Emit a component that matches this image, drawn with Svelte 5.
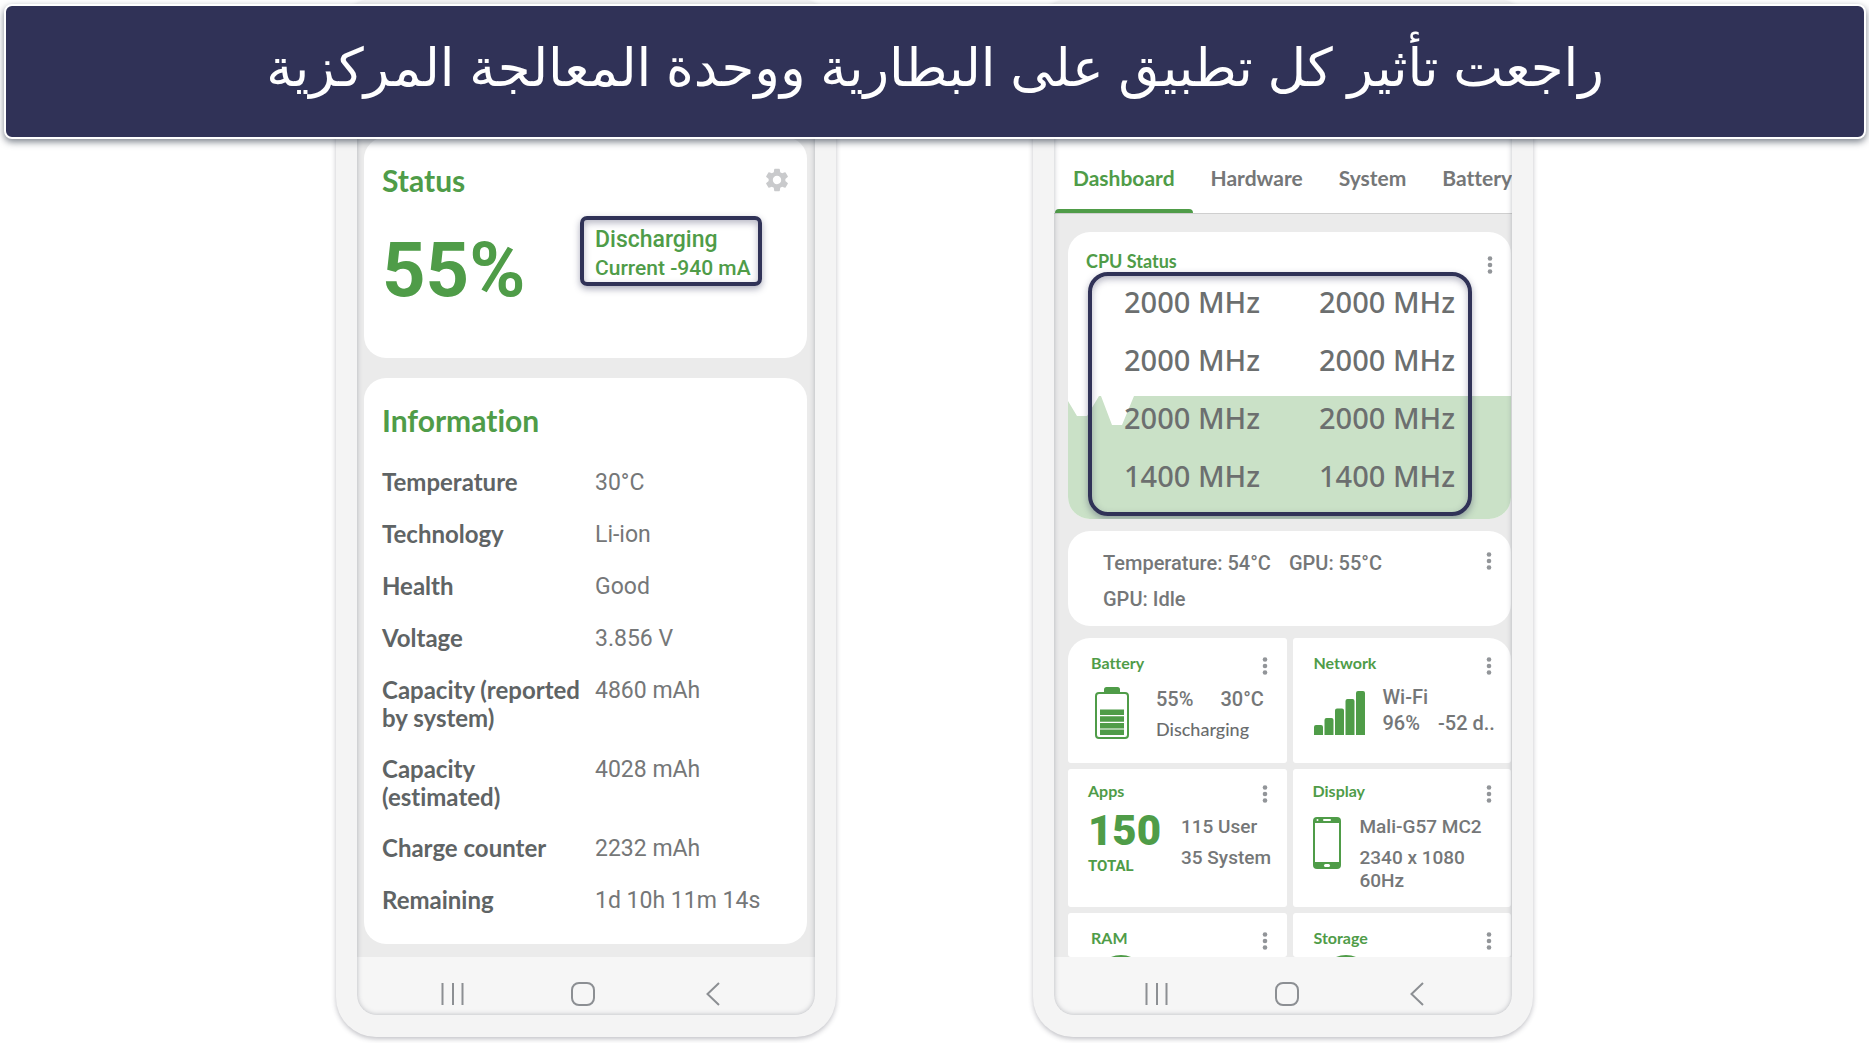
<script>
  const info = [
    ['Temperature', '30°C'],
    ['Technology', 'Li-ion'],
    ['Health', 'Good'],
    ['Voltage', '3.856 V'],
    ['Capacity (reported by system)', '4860 mAh'],
    ['Capacity (estimated)', '4028 mAh'],
    ['Charge counter', '2232 mAh'],
    ['Remaining', '1d 10h 11m 14s'],
  ];
  const cores = ['2000 MHz', '2000 MHz', '2000 MHz', '2000 MHz', '2000 MHz', '2000 MHz', '1400 MHz', '1400 MHz'];
  const tabs = ['Dashboard', 'Hardware', 'System', 'Battery'];
  let active = $state(0);
</script>

{#snippet kebab(name)}
  <button class="kebab" aria-label="{name} menu">
    <svg width="6" height="20" viewBox="0 0 6 20" aria-hidden="true">
      <circle cx="3" cy="3.5" r="2.3" /><circle cx="3" cy="10" r="2.3" /><circle cx="3" cy="16.5" r="2.3" />
    </svg>
  </button>
{/snippet}

{#snippet navbar(kind)}
  <nav class="navbar {kind}" aria-label="System navigation">
    <button aria-label="Recent apps">
      <svg width="24" height="24" viewBox="0 0 24 24"><path d="M1.5 1v22M12 1v22M21.5 1v22" /></svg>
    </button>
    <button aria-label="Home">
      <svg width="24" height="24" viewBox="0 0 24 24"><rect x="1" y="1" width="22" height="22" rx="7" /></svg>
    </button>
    <button aria-label="Back">
      <svg width="24" height="24" viewBox="0 0 24 24"><path d="M18 1 6.500 12 18 23" /></svg>
    </button>
  </nav>
{/snippet}

<div class="page">
  <h1 class="banner" dir="rtl" lang="ar">راجعت تأثير كل تطبيق على البطارية ووحدة المعالجة المركزية</h1>

  <main class="stage">
    <section class="phone" aria-label="Battery details">
      <div class="screen">
        <div class="battery-body">
          <article class="card status">
            <header class="card-head">
              <h2>Status</h2>
              <button class="gear" aria-label="Settings">
                <svg width="28" height="28" viewBox="0 0 24 24" aria-hidden="true">
                  <path d="M19.140 12.940c.04-.3.060-.610.060-.940 0-.320-.020-.640-.070-.940l2.030-1.580a.49.49 0 0 0 .120-.610l-1.920-3.320a.488.488 0 0 0-.590-.220l-2.390.960c-.500-.380-1.030-.700-1.620-.940l-.360-2.540a.484.484 0 0 0-.480-.410h-3.840c-.240 0-.430.170-.470.410l-.360 2.540c-.590.240-1.130.570-1.620.940l-2.390-.960c-.220-.080-.470 0-.590.220L2.740 8.870c-.120.210-.080.470.120.610l2.030 1.580c-.050.300-.090.630-.090.940s.020.640.070.940l-2.030 1.580a.49.49 0 0 0-.120.610l1.920 3.320c.120.220.370.290.590.220l2.390-.960c.500.380 1.030.700 1.620.940l.360 2.540c.050.240.240.410.480.410h3.840c.240 0 .440-.170.470-.410l.360-2.540c.590-.240 1.130-.560 1.620-.940l2.390.960c.220.080.470 0 .590-.220l1.920-3.320c.120-.220.070-.470-.120-.610zM12 15.600A3.610 3.610 0 0 1 8.400 12c0-1.980 1.620-3.600 3.600-3.600s3.600 1.620 3.600 3.600-1.620 3.600-3.600 3.600z" />
                </svg>
              </button>
            </header>
            <div class="level-row">
              <strong class="level">55%</strong>
              <div class="mark state">
                <span class="state-name">Discharging</span>
                <span class="state-current">Current -940 mA</span>
              </div>
            </div>
          </article>

          <article class="card information">
            <h2>Information</h2>
            <table>
              <tbody>
                {#each info as [label, value]}
                  <tr><th scope="row">{label}</th><td>{value}</td></tr>
                {/each}
              </tbody>
            </table>
          </article>
        </div>
        {@render navbar('first')}
      </div>
    </section>

    <section class="phone" aria-label="Device dashboard">
      <div class="screen">
        <div class="tabs" role="tablist">
          {#each tabs as tab, i}
            <button role="tab" aria-selected={active === i} class:active={active === i} onclick={() => (active = i)}>{tab}</button>
          {/each}
        </div>
        <div class="dash-body">
          <article class="card cpu">
            <svg class="chart" viewBox="0 0 443 123" preserveAspectRatio="none" aria-hidden="true">
              <path d="M0 5 9 20H19L31 0H33L44 29H54L66 0H443V123H0Z" />
            </svg>
            <header class="card-head">
              <h3>CPU Status</h3>
              {@render kebab('CPU Status')}
            </header>
            <div class="mark cores">
              {#each cores as core}<span>{core}</span>{/each}
            </div>
          </article>

          <article class="card temps">
            <div>
              <p><span>Temperature: 54°C</span><span>GPU: 55°C</span></p>
              <p>GPU: Idle</p>
            </div>
            {@render kebab('Temperature')}
          </article>

          <div class="tiles">
            <article class="tile battery">
              <header class="card-head"><h4>Battery</h4>{@render kebab('Battery')}</header>
              <div class="tile-body">
                <svg width="34" height="52" viewBox="0 0 34 52" aria-hidden="true">
                  <path class="fill" d="M9 6V2.500Q9 0 11.500 0H22.500Q25 0 25 2.500V6Z" />
                  <rect class="line" x="1" y="6" width="32" height="45" rx="3" />
                  <path class="fill" d="M5 22.500h24v5.500H5zM5 29.200h24v5.500H5zM5 35.900h24v5.500H5zM5 42.400h24v5.500H5z" />
                </svg>
                <div class="lines">
                  <p class="pair"><span>55%</span><span>30°C</span></p>
                  <p class="lato">Discharging</p>
                </div>
              </div>
            </article>

            <article class="tile network">
              <header class="card-head"><h4>Network</h4>{@render kebab('Network')}</header>
              <div class="tile-body">
                <svg width="51" height="44" viewBox="0 0 51 44" aria-hidden="true">
                  <path class="fill" d="M0 44V36q0-2 2-2h5q2 0 2 2v8zM10.500 44V29q0-2 2-2h5q2 0 2 2v15zM21 44V19.500q0-2 2-2h5q2 0 2 2V44zM31.500 44V10q0-2 2-2h5q2 0 2 2v34zM42 44V2q0-2 2-2h5q2 0 2 2v42z" />
                </svg>
                <div class="lines">
                  <p>Wi-Fi</p>
                  <p class="pair"><span>96%</span><span>-52 d..</span></p>
                </div>
              </div>
            </article>

            <article class="tile apps">
              <header class="card-head"><h4>Apps</h4>{@render kebab('Apps')}</header>
              <div class="tile-body">
                <div class="total"><strong>150</strong><span>TOTAL</span></div>
                <div class="lines">
                  <p>115 User</p>
                  <p>35 System</p>
                </div>
              </div>
            </article>

            <article class="tile display">
              <header class="card-head"><h4>Display</h4>{@render kebab('Display')}</header>
              <div class="tile-body">
                <svg width="28" height="52" viewBox="0 0 28 52" aria-hidden="true">
                  <rect class="fill" width="28" height="52" rx="4" />
                  <rect class="paper" x="2" y="6" width="24" height="39" />
                  <rect class="paper" x="10" y="2" width="8" height="2" rx="1" />
                  <circle class="paper" cx="4.500" cy="3" r="1" />
                  <rect class="paper" x="11" y="47" width="6" height="3" rx="1.500" />
                </svg>
                <div class="lines">
                  <p>Mali-G57 MC2</p>
                  <p>2340 x 1080<br />60Hz</p>
                </div>
              </div>
            </article>

            <article class="tile ram">
              <header class="card-head"><h4>RAM</h4>{@render kebab('RAM')}</header>
              <svg class="ring" width="50" height="50" viewBox="0 0 50 50" aria-hidden="true"><circle cx="25" cy="25" r="23" /></svg>
            </article>
            <article class="tile storage">
              <header class="card-head"><h4>Storage</h4>{@render kebab('Storage')}</header>
              <svg class="ring" width="50" height="50" viewBox="0 0 50 50" aria-hidden="true"><circle cx="25" cy="25" r="23" /></svg>
            </article>
          </div>
        </div>
        {@render navbar('second')}
      </div>
    </section>
  </main>
</div>

<style>
  :global(body) { margin: 0; background: #fff; }
  .page {
    --green: #4f9c48;
    --navy: #303257;
    --grey: #757778;
    position: relative;
    min-height: 100vh;
    overflow: hidden;
    font-family: Roboto, "Liberation Sans", sans-serif;
    color: var(--grey);
  }
  h1, h2, h3, h4, p { margin: 0; }
  button { border: 0; padding: 0; background: none; font: inherit; color: inherit; cursor: pointer; }
  svg { display: block; flex: none; }

  .banner {
    position: absolute;
    z-index: 2;
    inset: 4px 3px auto 4px;
    box-sizing: border-box;
    height: 135px;
    border: 2px solid #fff;
    border-radius: 8px;
    background: var(--navy);
    box-shadow: 0 3px 7px rgba(40, 50, 65, 0.6);
    color: #fff;
    font: 400 53px/124px "Liberation Sans", "DejaVu Sans", sans-serif;
    text-align: center;
    white-space: nowrap;
  }

  .stage {
    display: flex;
    justify-content: center;
    gap: 197px;
    margin-top: -1px;
    padding-bottom: 7px;
  }
  .phone {
    flex: 0 1 500px;
    min-width: 0;
    box-sizing: border-box;
    display: flex;
    padding: 21px 21px 22px;
    border-radius: 40px;
    background: #f4f4f4;
    box-shadow: 0 2px 5px rgba(50, 50, 65, 0.3);
  }
  .screen {
    position: relative;
    flex: 1;
    min-width: 0;
    display: flex;
    flex-direction: column;
    overflow: hidden;
    border-radius: 20px;
    background: #ebebeb;
  }
  .screen::after {
    content: "";
    position: absolute;
    inset: 0;
    border-radius: 20px;
    box-shadow: inset 0 0 5px rgba(60, 65, 80, 0.35);
    pointer-events: none;
  }
  .card { position: relative; border-radius: 22px; background: #fff; }
  .card-head { display: flex; justify-content: space-between; align-items: flex-start; }
  h2, h3, h4, .tabs, th, .lato { font-family: Lato, sans-serif; font-variant-ligatures: none; }
  h2, h3, h4 { color: var(--green); font-weight: 700; }
  h2 { font-size: 30px; line-height: 34px; }
  h3 { font-size: 18px; line-height: 22px; }
  h4 { font-size: 16px; line-height: 20px; }

  .battery-body {
    flex: 1;
    display: flex;
    flex-direction: column;
    gap: 20px;
    padding: 117px 8px 11px 7px;
  }
  .status { padding: 26px 16px 50px 18px; }
  .information { padding: 25px 16px 17px 18px; }
  .gear { margin-top: 3px; }
  .gear svg { fill: #c9cacc; }
  .level-row { display: grid; grid-template-columns: 198px auto; justify-content: start; align-items: start; margin-top: 19px; }
  .level { margin-top: 16px; color: var(--green); font-size: 76px; line-height: 76px; font-weight: 700; }
  .mark {
    border: 4px solid var(--navy);
    box-shadow: 0 3px 7px rgba(48, 50, 87, 0.4), inset 0 3px 7px rgba(48, 50, 87, 0.35);
  }
  .state {
    display: grid;
    padding: 6px 7px 0 11px;
    border-radius: 7px;
    color: var(--green);
    font-weight: 500;
    line-height: 28px;
    white-space: nowrap;
  }
  .state-name { font-size: 23px; }
  .state-current { font-size: 21px; }

  table { width: 100%; margin-top: 20px; border-collapse: collapse; table-layout: fixed; }
  th, td { padding: 12px 0; text-align: left; vertical-align: top; line-height: 28px; }
  th { width: 205px; padding: 11px 8px 12px 0; color: #5f6465; font-size: 24px; font-weight: 700; }
  td { font-size: 23px; }

  .navbar { display: flex; align-items: flex-start; gap: 106px; padding: 25px 0 9px; background: #f6f6f6; }
  .first { padding-left: 84px; }
  .second { padding-left: 91px; }
  .navbar svg { fill: none; stroke: #8c8f93; stroke-width: 2; }

  .tabs {
    display: flex;
    padding: 134px 0 0 1px;
    overflow: hidden;
    border-bottom: 1px solid #cfcfcf;
    background: #fff;
    font-size: 21px;
    font-weight: 700;
    line-height: 24px;
  }
  .tabs button { position: relative; flex: none; padding: 12px 18px 23px; }
  .tabs .active { color: var(--green); }
  .tabs .active::after {
    content: "";
    position: absolute;
    inset: auto 0 0;
    height: 4px;
    border-radius: 4px 4px 0 0;
    background: var(--green);
  }
  .dash-body { flex: 1; padding: 18px 1px 0 14px; }
  .kebab svg { fill: #929599; }
  .cpu { overflow: hidden; padding: 18px 18px 3px; }
  .cpu h3 { position: relative; }
  .cpu .card-head { height: 22px; }
  .cpu .kebab { position: relative; padding-top: 5px; }
  .chart { position: absolute; left: 0; bottom: 0; width: 100%; height: 123px; fill: #cae1c7; }
  .cores {
    position: relative;
    display: grid;
    grid-template-columns: 195px auto;
    justify-content: start;
    row-gap: 18px;
    margin: 0 21px 0 2px;
    padding: 6px 0 16px 32px;
    border-radius: 20px;
    color: #6c6f6f;
    font-family: "Noto Sans", "Open Sans", sans-serif;
    font-size: 29px;
    font-weight: 500;
    line-height: 40px;
  }
  .temps {
    display: flex;
    justify-content: space-between;
    align-items: flex-start;
    margin-top: 12px;
    padding: 14px 19px 9px 35px;
    font-size: 20px;
    font-weight: 500;
    line-height: 36px;
  }
  .temps p { display: flex; gap: 18px; }
  .temps .kebab { padding-top: 6px; line-height: 20px; }

  .tiles { display: grid; grid-template-columns: repeat(2, minmax(0, 1fr)); gap: 6px; margin-top: 12px; }
  .tile { padding: 15px 19px 15px 20px; border-radius: 3px; background: #fff; font-size: 20px; font-weight: 500; line-height: 24px; white-space: nowrap; }
  .tile .kebab { padding: 3px 0; line-height: 20px; }
  .tile-body { display: flex; }
  .lines { display: grid; align-content: start; }
  .pair { display: flex; }
  .fill { fill: var(--green); }
  .line { fill: none; stroke: var(--green); stroke-width: 2; }
  .paper { fill: #fff; }

  .battery { padding-left: 23px; padding-bottom: 22px; border-top-left-radius: 22px; }
  .battery .tile-body { gap: 27px; padding: 8px 0 0 4px; }
  .battery .lines { gap: 6px; }
  .battery .pair { gap: 27px; }
  .lato { color: #6a6c6d; font-size: 18px; }
  .network { padding-left: 21px; border-top-right-radius: 22px; line-height: 26px; }
  .network .tile-body { gap: 18px; padding-top: 5px; }
  .network .tile-body svg { margin-top: 7px; }
  .network .pair { gap: 18px; }
  .apps, .display { padding-top: 12px; font-size: 19px; }
  .apps .tile-body { display: grid; grid-template-columns: 93px auto; justify-content: start; padding-top: 2px; }
  .apps .lines, .display .lines { gap: 8px; padding-top: 6px; line-height: 23px; }
  .total { display: grid; gap: 3px; align-content: start; color: var(--green); font-weight: 700; }
  .total strong { font-size: 42px; line-height: 44px; }
  .total span { font-size: 15px; line-height: 20px; }
  .display .tile-body { gap: 19px; padding-top: 2px; }
  .display .tile-body svg { margin-top: 8px; }
  .ram, .storage { max-height: 29px; overflow: hidden; padding-bottom: 0; }
  .battery-body { padding-bottom: 11px; }
  .ram { padding-left: 23px; }
  .storage { padding-left: 21px; }
  .ring { margin: 1px 0 0 5px; }
  .storage .ring { margin-left: 7px; }
  .ring circle { fill: none; stroke: var(--green); stroke-width: 4; }
</style>
